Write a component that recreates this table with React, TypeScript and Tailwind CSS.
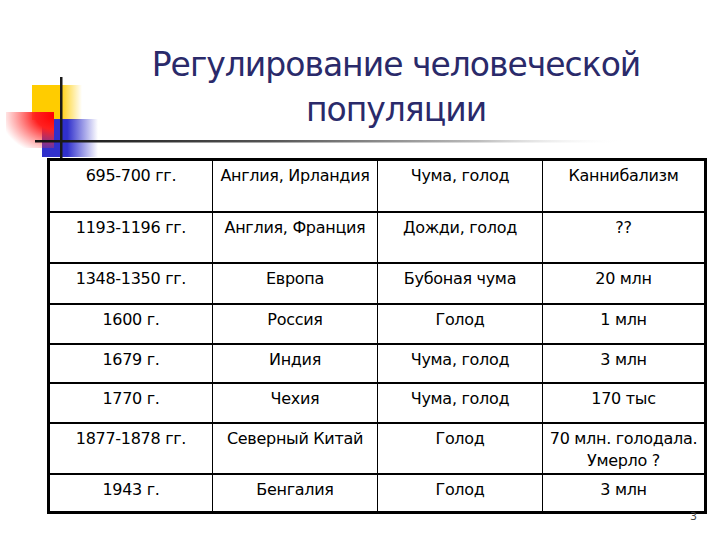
import React from 'react'

type Row = { h: string; cells: React.ReactNode[] }

const rows: Row[] = [
  { h: 'h-[50px]', cells: ['695-700 гг.', 'Англия, Ирландия', 'Чума, голод', 'Каннибализм'] },
  { h: 'h-[51px] border-t-2', cells: ['1193-1196 гг.', 'Англия, Франция', 'Дожди, голод', '??'] },
  { h: 'h-[41px] border-t-2', cells: ['1348-1350 гг.', 'Европа', 'Бубоная чума', '20 млн'] },
  { h: 'h-[40px] border-t-2', cells: ['1600 г.', 'Россия', 'Голод', '1 млн'] },
  { h: 'h-[39px] border-t-2', cells: ['1679 г.', 'Индия', 'Чума, голод', '3 млн'] },
  { h: 'h-[40px] border-t-2', cells: ['1770 г.', 'Чехия', 'Чума, голод', '170 тыс'] },
  {
    h: 'h-[51px] border-t-2',
    cells: [
      '1877-1878 гг.',
      'Северный Китай',
      'Голод',
      <>
        70 млн. голодала.
        <br />
        Умерло ?
      </>,
    ],
  },
  { h: 'h-[38px] border-t-2', cells: ['1943 г.', 'Бенгалия', 'Голод', '3 млн'] },
]

function Logo() {
  return (
    <svg className="absolute left-0 top-0" width="720" height="170" viewBox="0 0 720 170">
      <defs>
        <linearGradient id="yel" x1="0" y1="0" x2="1" y2="0">
          <stop offset="0" stopColor="#ffcc00" />
          <stop offset="0.55" stopColor="#ffcc00" />
          <stop offset="1" stopColor="#ffcc00" stopOpacity="0" />
        </linearGradient>
        <linearGradient id="blu" x1="0" y1="0" x2="1" y2="0">
          <stop offset="0" stopColor="#3030cc" />
          <stop offset="0.45" stopColor="#3030cc" />
          <stop offset="1" stopColor="#3030cc" stopOpacity="0" />
        </linearGradient>
        <radialGradient id="red" cx="1" cy="0.1" r="1.1">
          <stop offset="0" stopColor="#ff0000" />
          <stop offset="0.35" stopColor="#ff2020" />
          <stop offset="1" stopColor="#ff4040" stopOpacity="0" />
        </radialGradient>
        <linearGradient id="ln" x1="0" y1="0" x2="1" y2="0">
          <stop offset="0" stopColor="#111111" />
          <stop offset="0.4" stopColor="#555555" />
          <stop offset="0.75" stopColor="#bbbbbb" />
          <stop offset="1" stopColor="#ffffff" stopOpacity="0" />
        </linearGradient>
      </defs>
      <rect x="32" y="85" width="50" height="35" fill="url(#yel)" />
      <rect x="42" y="119" width="56" height="38" fill="url(#blu)" />
      <rect x="6" y="112" width="48" height="36" fill="url(#red)" />
      <rect x="35" y="140" width="590" height="2.5" fill="url(#ln)" />
      <rect x="60" y="77" width="2.5" height="84" fill="#1a1a1a" />
    </svg>
  )
}

export default function App() {
  return (
    <div
      className="relative w-[720px] h-[540px] bg-white overflow-hidden"
      style={{ fontFamily: '"DejaVu Sans", "Noto Sans", sans-serif' }}
    >
      <Logo />
      <div className="relative pt-[42px] pl-[72px] text-center text-[#2a2a6a] text-[33px] leading-[45px] tracking-[-1px]">
        <div>Регулирование человеческой</div>
        <div>популяции</div>
      </div>

      <div className="relative ml-[47px] mt-[26px] w-[660px] border-[3px] border-black text-black text-[16px] leading-[22px] tracking-[-0.3px]">
        {rows.map((r, i) => (
          <div key={i} className={`grid grid-cols-[162px_165px_165px_162px] border-black ${r.h}`}>
            {r.cells.map((c, j) => (
              <div key={j} className={`text-center pt-[4px] border-black ${j > 0 ? 'border-l' : ''}`}>
                {c}
              </div>
            ))}
          </div>
        ))}
      </div>
      <div className="relative -mt-[3px] pl-[690px] text-[11px] leading-none text-[#444]">3</div>
    </div>
  )
}
